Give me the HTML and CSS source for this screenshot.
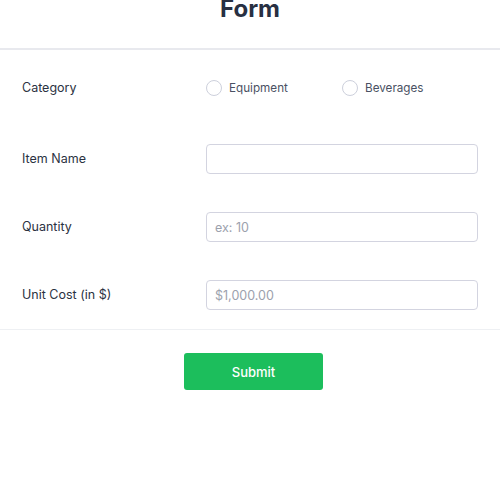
FILE: index.html
```html
<!DOCTYPE html>
<html lang="en">
<head>
<meta charset="utf-8">
<title>Form</title>
<link rel="stylesheet" href="styles.css">
</head>
<body>
<header class="header">
  <h1 class="title">Form</h1>
</header>
<main class="fields">
  <div class="row row-category">
    <span class="label">Category</span>
    <div class="radios">
      <label class="radio"><input type="radio" name="cat"><span class="radio-dot"></span><span class="radio-text">Equipment</span></label>
      <label class="radio"><input type="radio" name="cat"><span class="radio-dot"></span><span class="radio-text">Beverages</span></label>
    </div>
  </div>
  <div class="row">
    <label class="label" for="item">Item Name</label>
    <input class="input" id="item" type="text">
  </div>
  <div class="row">
    <label class="label" for="qty">Quantity</label>
    <input class="input" id="qty" type="text" placeholder="ex: 10">
  </div>
  <div class="row">
    <label class="label" for="cost">Unit Cost (in $)</label>
    <input class="input" id="cost" type="text" placeholder="$1,000.00">
  </div>
</main>
<footer class="actions">
  <button class="submit" type="button">Submit</button>
</footer>
</body>
</html>
```
FILE: styles.css
```css
* { box-sizing: border-box; }
html, body { margin: 0; padding: 0; background: #ffffff; }
body {
  font-family: Inter, "Noto Sans", "Liberation Sans", sans-serif;
  color: #2b3242;
  overflow: hidden;
  height: 484px;
}
.header {
  border-bottom: 2px solid #e8e9ee;
  padding-bottom: 23px;
  text-align: center;
}
.title {
  margin: -7px 0 0 0;
  font-size: 24px;
  line-height: 32px;
  font-weight: 700;
  color: #283042;
}
.fields {
  padding: 23px 22px 19px 22px;
  border-bottom: 1px solid #eef0f3;
  display: flex;
  flex-direction: column;
  gap: 38px;
}
.row {
  display: grid;
  grid-template-columns: 184px 1fr;
  align-items: center;
  height: 30px;
}
.row-category { margin-bottom: 3px; }
.label {
  font-size: 12.5px;
  line-height: 16px;
  color: #2b3242;
}
.radios {
  display: grid;
  grid-template-columns: 136px 136px;
}
.radio {
  display: flex;
  align-items: center;
  gap: 7px;
  font-size: 11.7px;
  color: #4a5163;
}
.radio input { display: none; }
.radio-dot {
  width: 16px;
  height: 16px;
  border-radius: 50%;
  border: 1px solid #cdd0dc;
  background: #fff;
}
.input {
  height: 30px;
  width: 100%;
  border: 1px solid #d3d4e0;
  border-radius: 4px;
  padding: 0 8px;
  font-family: inherit;
  font-size: 12.5px;
  color: #2b3242;
  background: #fff;
  outline: none;
}
.input::placeholder { color: #9ca1ad; }
.actions {
  display: flex;
  justify-content: center;
  padding: 23px 0 0 7px;
}
.submit {
  width: 139px;
  height: 37px;
  border: none;
  border-radius: 3px;
  background: #1cbe5c;
  color: #ffffff;
  font-family: inherit;
  font-size: 13px;
  font-weight: 500;
  cursor: pointer;
}
```
